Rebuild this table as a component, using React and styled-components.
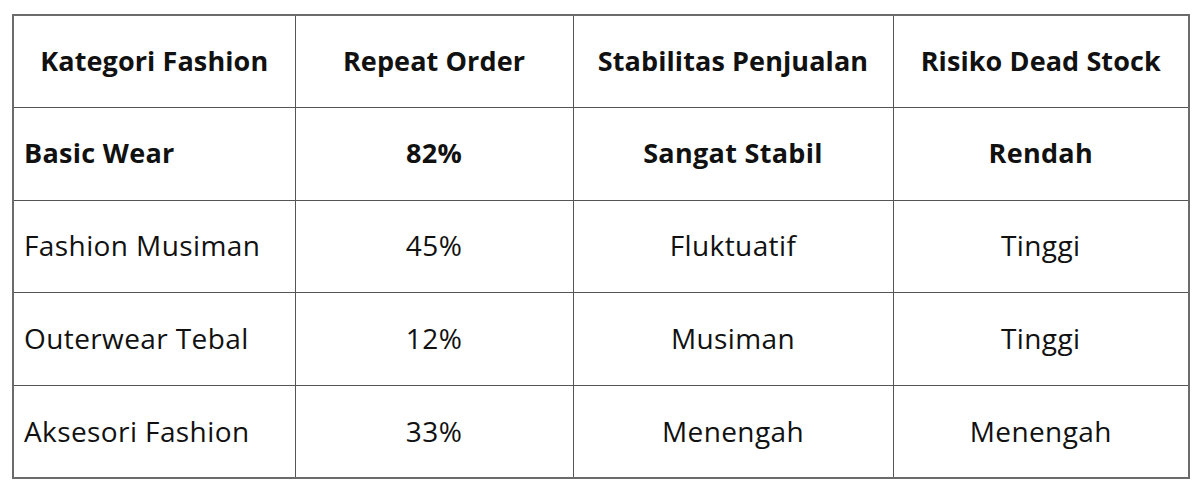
import React from 'react';
import styled, { createGlobalStyle } from 'styled-components';

const GlobalStyle = createGlobalStyle`
    body {
        margin: 0;
        background: #ffffff;
        font-family: "Open Sans", "Liberation Sans", sans-serif;
        color: #111;
    }
`;

const Page = styled.div`
    padding: 14px 12px 0 12px;
`;

const Table = styled.table`
    width: 1176px;
    border-collapse: collapse;
    table-layout: fixed;
    border: 2px solid #6b6b6b;
`;

const HeadCell = styled.th`
    height: 89px;
    border: 1.5px solid #555;
    font-size: 27px;
    font-weight: 700;
    letter-spacing: 0.1px;
    text-align: center;
    padding: 0 0 2px 0;
`;

const Cell = styled.td`
    height: 89.6px;
    border: 1.5px solid #555;
    font-size: ${(p) => (p.$bold ? '27px' : '28px')};
    font-weight: ${(p) => (p.$bold ? 700 : 400)};
    letter-spacing: ${(p) => (p.$bold ? '0.3px' : '0.4px')};
    text-align: ${(p) => (p.$left ? 'left' : 'center')};
    padding: 0 0 2px ${(p) => (p.$left ? '10px' : '0')};
`;

const columns = [
    { title: 'Kategori Fashion', width: 282 },
    { title: 'Repeat Order', width: 278 },
    { title: 'Stabilitas Penjualan', width: 320 },
    { title: 'Risiko Dead Stock', width: 296 },
];

const rows = [
    { name: 'Basic Wear', repeat: '82%', stable: 'Sangat Stabil', risk: 'Rendah', bold: true },
    { name: 'Fashion Musiman', repeat: '45%', stable: 'Fluktuatif', risk: 'Tinggi' },
    { name: 'Outerwear Tebal', repeat: '12%', stable: 'Musiman', risk: 'Tinggi' },
    { name: 'Aksesori Fashion', repeat: '33%', stable: 'Menengah', risk: 'Menengah' },
];

const App = () => {
    return (
        <Page>
            <GlobalStyle />
            <Table>
                <colgroup>
                    {columns.map((c) => (
                        <col key={c.title} style={{ width: c.width }} />
                    ))}
                </colgroup>
                <thead>
                    <tr>
                        {columns.map((c) => (
                            <HeadCell key={c.title}>{c.title}</HeadCell>
                        ))}
                    </tr>
                </thead>
                <tbody>
                    {rows.map((r) => (
                        <tr key={r.name}>
                            <Cell $left $bold={r.bold}>{r.name}</Cell>
                            <Cell $bold={r.bold}>{r.repeat}</Cell>
                            <Cell $bold={r.bold}>{r.stable}</Cell>
                            <Cell $bold={r.bold}>{r.risk}</Cell>
                        </tr>
                    ))}
                </tbody>
            </Table>
        </Page>
    );
};

export default App;
